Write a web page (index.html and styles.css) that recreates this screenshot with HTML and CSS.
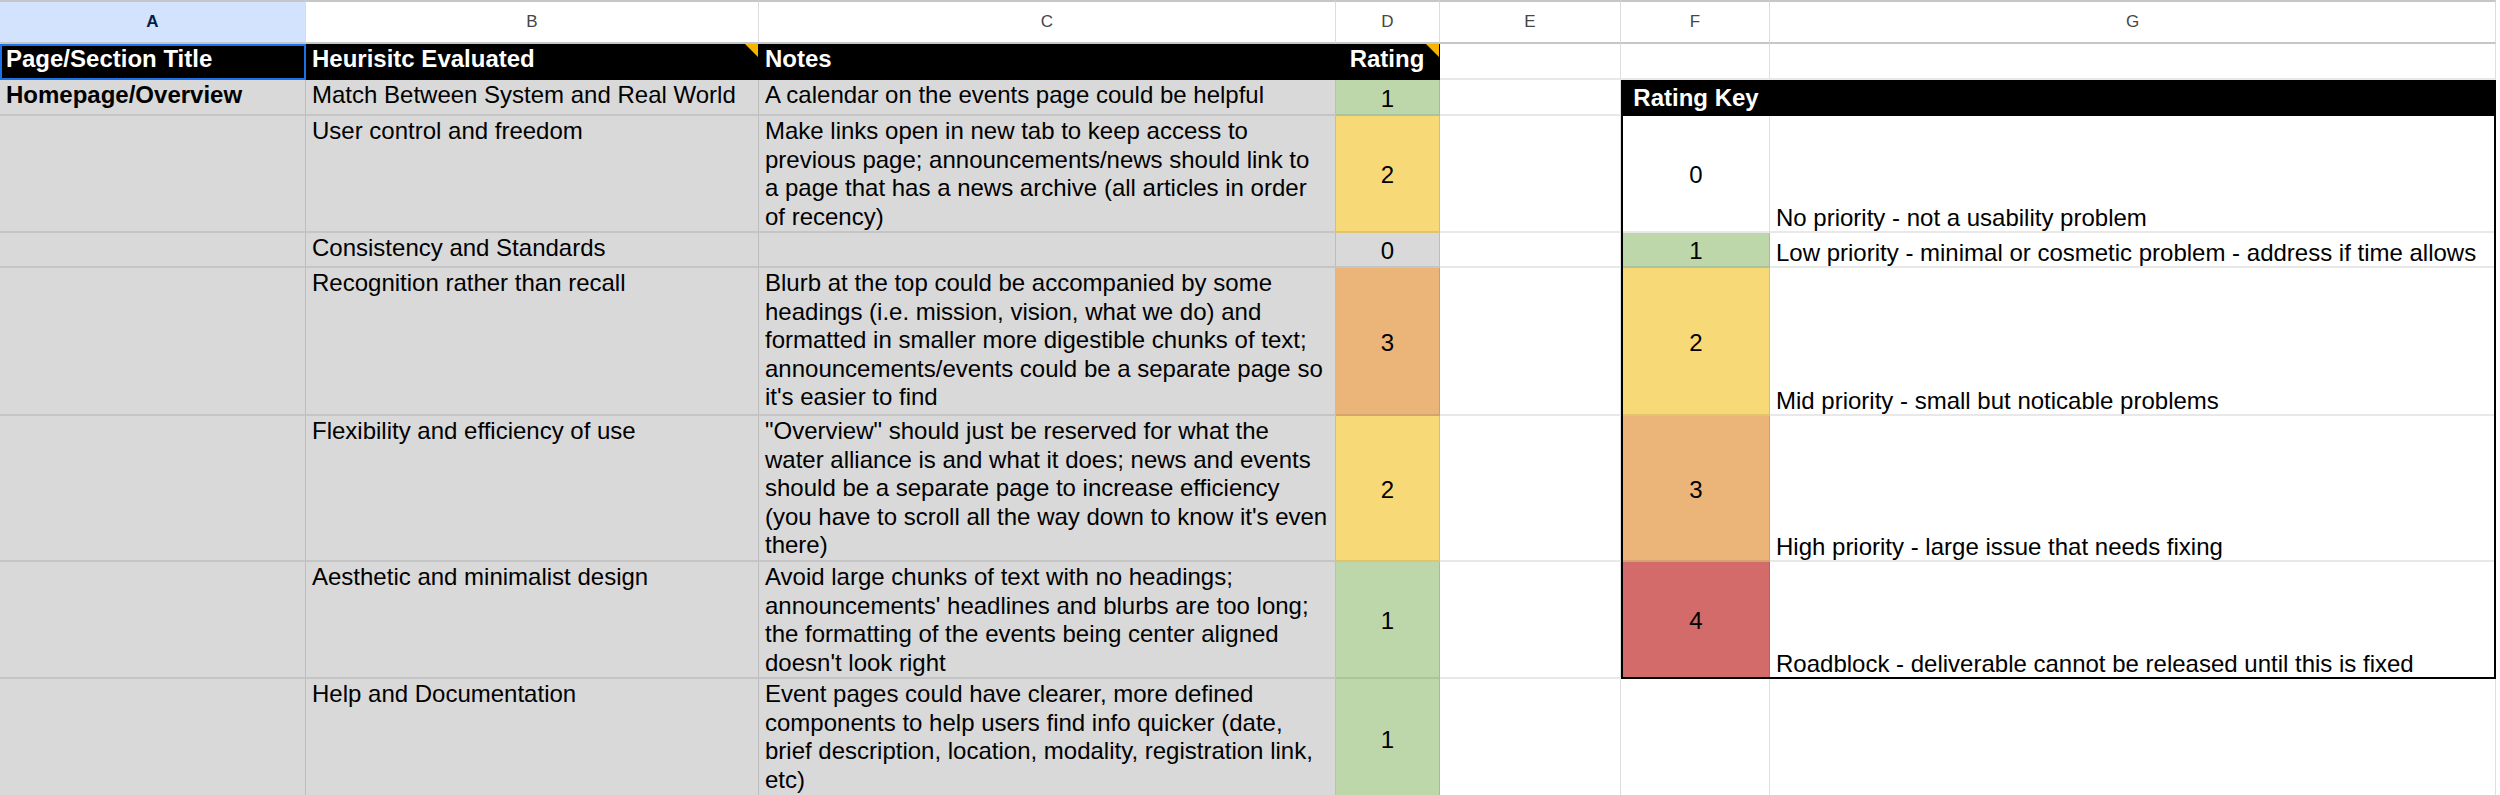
FILE: index.html
```html
<!DOCTYPE html>
<html lang="en">
<head>
    <meta charset="UTF-8">
    <meta name="viewport" content="width=device-width, initial-scale=1.0">
    <title>Heuristic Evaluation</title>
    <link rel="stylesheet" href="styles.css">
</head>
<body>
    <div class="sheet">
        <!-- column letters -->
        <div class="col-head active">A</div>
        <div class="col-head">B</div>
        <div class="col-head">C</div>
        <div class="col-head">D</div>
        <div class="col-head">E</div>
        <div class="col-head">F</div>
        <div class="col-head">G</div>

        <!-- row 1 -->
        <div class="cell head selected">Page/Section Title</div>
        <div class="cell head has-note">Heurisitc Evaluated</div>
        <div class="cell head">Notes</div>
        <div class="cell head center has-note">Rating</div>
        <div class="cell"></div>
        <div class="cell"></div>
        <div class="cell"></div>

        <!-- row 2 -->
        <div class="cell gray bold">Homepage/Overview</div>
        <div class="cell gray">Match Between System and Real World</div>
        <div class="cell gray">A calendar on the events page could be helpful</div>
        <div class="cell num green">1</div>
        <div class="cell"></div>

        <!-- row 3 -->
        <div class="cell gray"></div>
        <div class="cell gray">User control and freedom</div>
        <div class="cell gray">Make links open in new tab to keep access to previous page; announcements/news should link to a page that has a news archive (all articles in order of recency)</div>
        <div class="cell num yellow">2</div>
        <div class="cell"></div>

        <!-- row 4 -->
        <div class="cell gray"></div>
        <div class="cell gray">Consistency and Standards</div>
        <div class="cell gray"></div>
        <div class="cell num gray">0</div>
        <div class="cell"></div>

        <!-- row 5 -->
        <div class="cell gray"></div>
        <div class="cell gray">Recognition rather than recall</div>
        <div class="cell gray">Blurb at the top could be accompanied by some headings (i.e. mission, vision, what we do) and formatted in smaller more digestible chunks of text; announcements/events could be a separate page so it's easier to find</div>
        <div class="cell num orange">3</div>
        <div class="cell"></div>

        <!-- row 6 -->
        <div class="cell gray"></div>
        <div class="cell gray">Flexibility and efficiency of use</div>
        <div class="cell gray">"Overview" should just be reserved for what the water alliance is and what it does; news and events should be a separate page to increase efficiency (you have to scroll all the way down to know it's even there)</div>
        <div class="cell num yellow">2</div>
        <div class="cell"></div>

        <!-- row 7 -->
        <div class="cell gray"></div>
        <div class="cell gray">Aesthetic and minimalist design</div>
        <div class="cell gray">Avoid large chunks of text with no headings; announcements' headlines and blurbs are too long; the formatting of the events being center aligned doesn't look right</div>
        <div class="cell num green">1</div>
        <div class="cell"></div>

        <!-- row 8 -->
        <div class="cell gray"></div>
        <div class="cell gray">Help and Documentation</div>
        <div class="cell gray">Event pages could have clearer, more defined components to help users find info quicker (date, brief description, location, modality, registration link, etc)</div>
        <div class="cell num green">1</div>
        <div class="cell"></div>
        <div class="cell"></div>
        <div class="cell"></div>

        <!-- rating key, F2:G7 -->
        <div class="key">
            <div class="cell head center">Rating Key</div>
            <div class="cell head"></div>

            <div class="cell num">0</div>
            <div class="cell desc">No priority - not a usability problem</div>

            <div class="cell num green">1</div>
            <div class="cell desc">Low priority - minimal or cosmetic problem - address if time allows</div>

            <div class="cell num yellow">2</div>
            <div class="cell desc">Mid priority - small but noticable problems</div>

            <div class="cell num orange">3</div>
            <div class="cell desc">High priority - large issue that needs fixing</div>

            <div class="cell num red">4</div>
            <div class="cell desc">Roadblock - deliverable cannot be released until this is fixed</div>
        </div>
    </div>
</body>
</html>
```

FILE: styles.css
```css
body {
    margin: 0;
    font-family: "Liberation Sans", Arial, sans-serif;
    background: #fff;
    overflow: hidden;
}
.sheet {
    display: grid;
    grid-template-columns: 306px 453px 577px 104px 181px 149px 726px;
    grid-template-rows: 44px 36px 36px 117px 35px 148px 146px 117px 120px;
}
.col-head {
    box-sizing: border-box;
    display: flex;
    align-items: center;
    justify-content: center;
    font-size: 17px;
    color: #444746;
    border-top: 2px solid #c4c7c5;
    border-bottom: 2px solid #c4c7c5;
    border-right: 1px solid #dadce0;
}
.col-head.active {
    background: #d3e3fd;
    color: #041e49;
    font-weight: bold;
}
.cell {
    box-sizing: border-box;
    position: relative;
    padding: 1px 7px 0 6px;
    font-size: 24px;
    line-height: 28.5px;
    color: #000;
    border-right: 1px solid rgba(0, 0, 0, 0.12);
    border-bottom: 2px solid rgba(0, 0, 0, 0.09);
    overflow: hidden;
}
.head {
    background: #000;
    color: #fff;
    font-weight: bold;
}
.selected {
    outline: 2px solid #1a73e8;
    outline-offset: -2px;
}
.has-note::after {
    content: "";
    position: absolute;
    top: 0;
    right: 0;
    border-top: 13px solid #f4b400;
    border-left: 13px solid transparent;
}
.center {
    text-align: center;
}
.bold {
    font-weight: bold;
}
.gray {
    background: #d9d9d9;
}
.num {
    display: flex;
    align-items: center;
    justify-content: center;
    padding: 4px 0 0;
}
.green {
    background: #bdd7ab;
}
.yellow {
    background: #f8d978;
}
.orange {
    background: #ebb479;
}
.red {
    background: #d26b69;
}

.key {
    grid-column: 6 / 8;
    grid-row: 3 / 9;
    display: grid;
    grid-template-columns: 147px 1fr;
    grid-template-rows: 34px 117px 35px 148px 146px 115px;
    border: 2px solid #000;
}
.key .head {
    display: flex;
    align-items: center;
    justify-content: center;
    padding: 0;
}
.key .desc {
    display: flex;
    align-items: flex-end;
    border-right: none;
    padding-bottom: 0;
    line-height: 26.5px;
}
.key .cell:nth-last-child(-n+2) {
    border-bottom: none;
}
```
